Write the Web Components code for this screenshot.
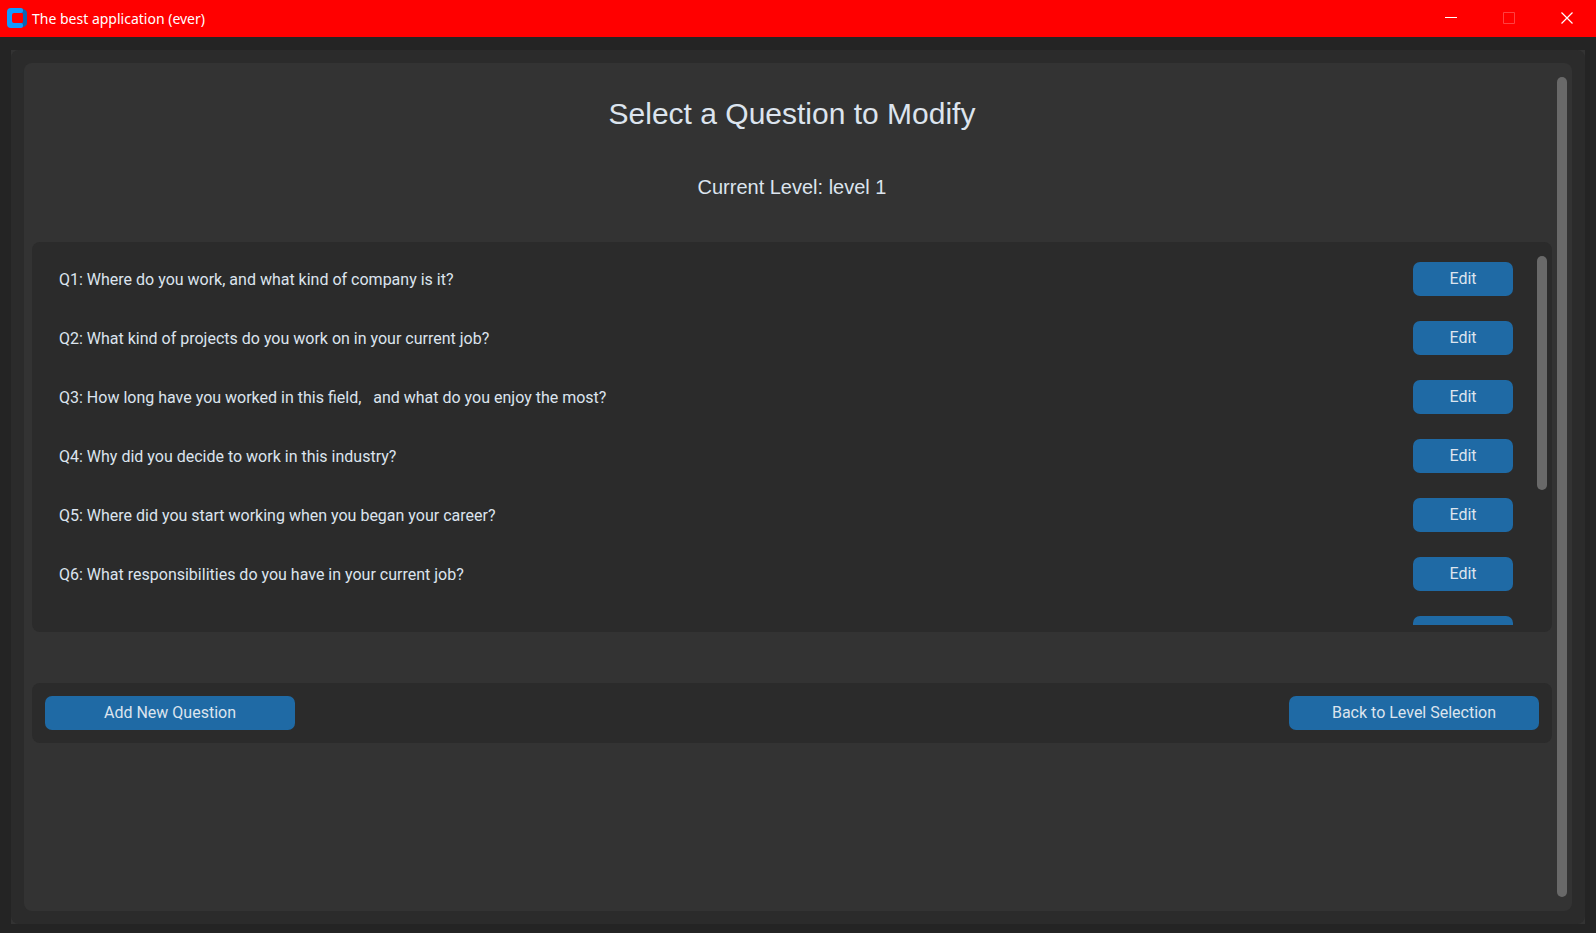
<!DOCTYPE html>
<html lang="en">
<head>
<meta charset="utf-8">
<title>The best application (ever)</title>
<style>
  html, body { margin: 0; height: 100%; }
  body { background: #242424; color: #dce4ee; font: 16px/20px Roboto, sans-serif; }
</style>
</head>
<body>
<app-window>
  <title-bar slot="bar">The best application (ever)</title-bar>
  <scroll-panel>
    <page-heading>
      Select a Question to Modify
      <span slot="sub">Current Level: level 1</span>
    </page-heading>
    <question-list>
      <question-row>Q1: Where do you work, and what kind of company is it?</question-row>
      <question-row>Q2: What kind of projects do you work on in your current job?</question-row>
      <question-row>Q3: How long have you worked in this field,   and what do you enjoy the most?</question-row>
      <question-row>Q4: Why did you decide to work in this industry?</question-row>
      <question-row>Q5: Where did you start working when you began your career?</question-row>
      <question-row>Q6: What responsibilities do you have in your current job?</question-row>
      <question-row></question-row>
    </question-list>
    <action-bar>
      <app-button wide>Add New Question</app-button>
      <app-button wide>Back to Level Selection</app-button>
    </action-bar>
  </scroll-panel>
</app-window>
<script>
const define = (name, html) => customElements.define(name, class extends HTMLElement {
  constructor() {
    super();
    this.attachShadow({ mode: 'open' }).innerHTML = html;
  }
});

define('app-window', `
  <style>
    :host { display: flex; flex-direction: column; min-height: 100%; }
    .back { flex: 1; display: flex; margin: 13px 11px 9px; background: #333333; }
    main { flex: 1; display: flex; min-width: 0; padding: 13px; border-radius: 8px; background: #2b2b2b; }
    ::slotted(scroll-panel) { flex: 1; min-width: 0; }
  </style>
  <slot name="bar"></slot>
  <div class="back"><main><slot></slot></main></div>`);

define('title-bar', `
  <style>
    :host { display: block; }
    header { display: flex; align-items: flex-start; height: 37px;
      background: #ff0000; color: #ffffff; font: 14px/38px "Segoe UI", "Noto Sans", sans-serif; }
    .logo { width: 20px; height: 20px; margin: 8px 5px 0 7px; }
    .name { flex: 1; }
    button { width: 58px; height: 36px; padding: 0; border: 0; background: none; color: #ffffff;
      display: flex; align-items: center; justify-content: center; }
    button:disabled { color: #ff4040; }
  </style>
  <header>
    <svg class="logo" viewBox="0 0 20 20" aria-hidden="true">
      <path fill="#0a64b4" d="M15 1h1q4 1 4 4v10q0 3-4 4h-1l-1-3 2-2V6l-2-2z"/>
      <path fill="#0f9bff" d="M4 0h10q2 0 2 2v1q0 2-2 2H7Q5 5 5 7v6q0 2 2 2h7q2 0 2 2v1q0 2-2 2H4q-4 0-4-4V4q0-4 4-4z"/>
    </svg>
    <span class="name"><slot></slot></span>
    <button aria-label="Minimize"><svg width="12" height="12" viewBox="0 0 12 12"><path d="M0 5.5h12" stroke="currentColor"/></svg></button>
    <button aria-label="Maximize" disabled><svg width="12" height="12" viewBox="0 0 12 12"><path d="M.5.5h11v11H.5z" fill="none" stroke="currentColor"/></svg></button>
    <button aria-label="Close"><svg width="12" height="12" viewBox="0 0 12 12"><path d="M.5.5l11 11M11.5.5l-11 11" stroke="currentColor" stroke-width="1.2"/></svg></button>
  </header>`);

define('scroll-thumb', `
  <style>:host { display: block; width: 10px; border-radius: 5px; background: #696969; }</style>`);

define('scroll-panel', `
  <style>
    :host { display: flex; gap: 5px; border-radius: 8px; background: #333333; box-sizing: border-box; padding: 0 5px 0 8px; }
    .content { flex: 1; min-width: 0; }
    scroll-thumb { margin: 14px 0; }
  </style>
  <div class="content"><slot></slot></div>
  <scroll-thumb></scroll-thumb>`);

define('page-heading', `
  <style>
    :host { display: block; text-align: center; font-family: Arial, "Liberation Sans", sans-serif; }
    h1 { margin: 0; padding-top: 33px; font-size: 30px; line-height: 36px; font-weight: 400; }
    p { margin: 0; padding: 43px 0; font-size: 20px; line-height: 24px; }
  </style>
  <h1><slot></slot></h1>
  <p><slot name="sub"></slot></p>`);

define('question-list', `
  <style>
    :host { display: flex; height: 390px; box-sizing: border-box; padding: 7px 5px 7px 14px; border-radius: 8px; background: #2b2b2b; }
    .rows { flex: 1; min-width: 0; overflow: hidden; }
    scroll-thumb { height: 234px; margin: 7px 0 0 11px; }
  </style>
  <div class="rows"><slot></slot></div>
  <scroll-thumb></scroll-thumb>`);

define('question-row', `
  <style>
    :host { display: flex; align-items: center; justify-content: space-between; padding: 13px 13px 12px; }
    span { white-space: pre; padding-top: 2px; }
  </style>
  <span><slot></slot></span>
  <app-button>Edit</app-button>`);

define('app-button', `
  <style>
    :host { display: block; width: 100px; }
    :host([wide]) { width: 250px; }
    button { width: 100%; height: 34px; padding: 0 0 1px; border: 0; border-radius: 7px; background: #1f6aa5;
      color: inherit; font: inherit; cursor: pointer; display: block; }
    button:hover { background: #144870; }
  </style>
  <button><slot></slot></button>`);

define('action-bar', `
  <style>
    :host { display: flex; justify-content: space-between; margin-top: 51px; padding: 13px; border-radius: 8px; background: #2b2b2b; }
  </style>
  <slot></slot>`);
</script>
</body>
</html>
